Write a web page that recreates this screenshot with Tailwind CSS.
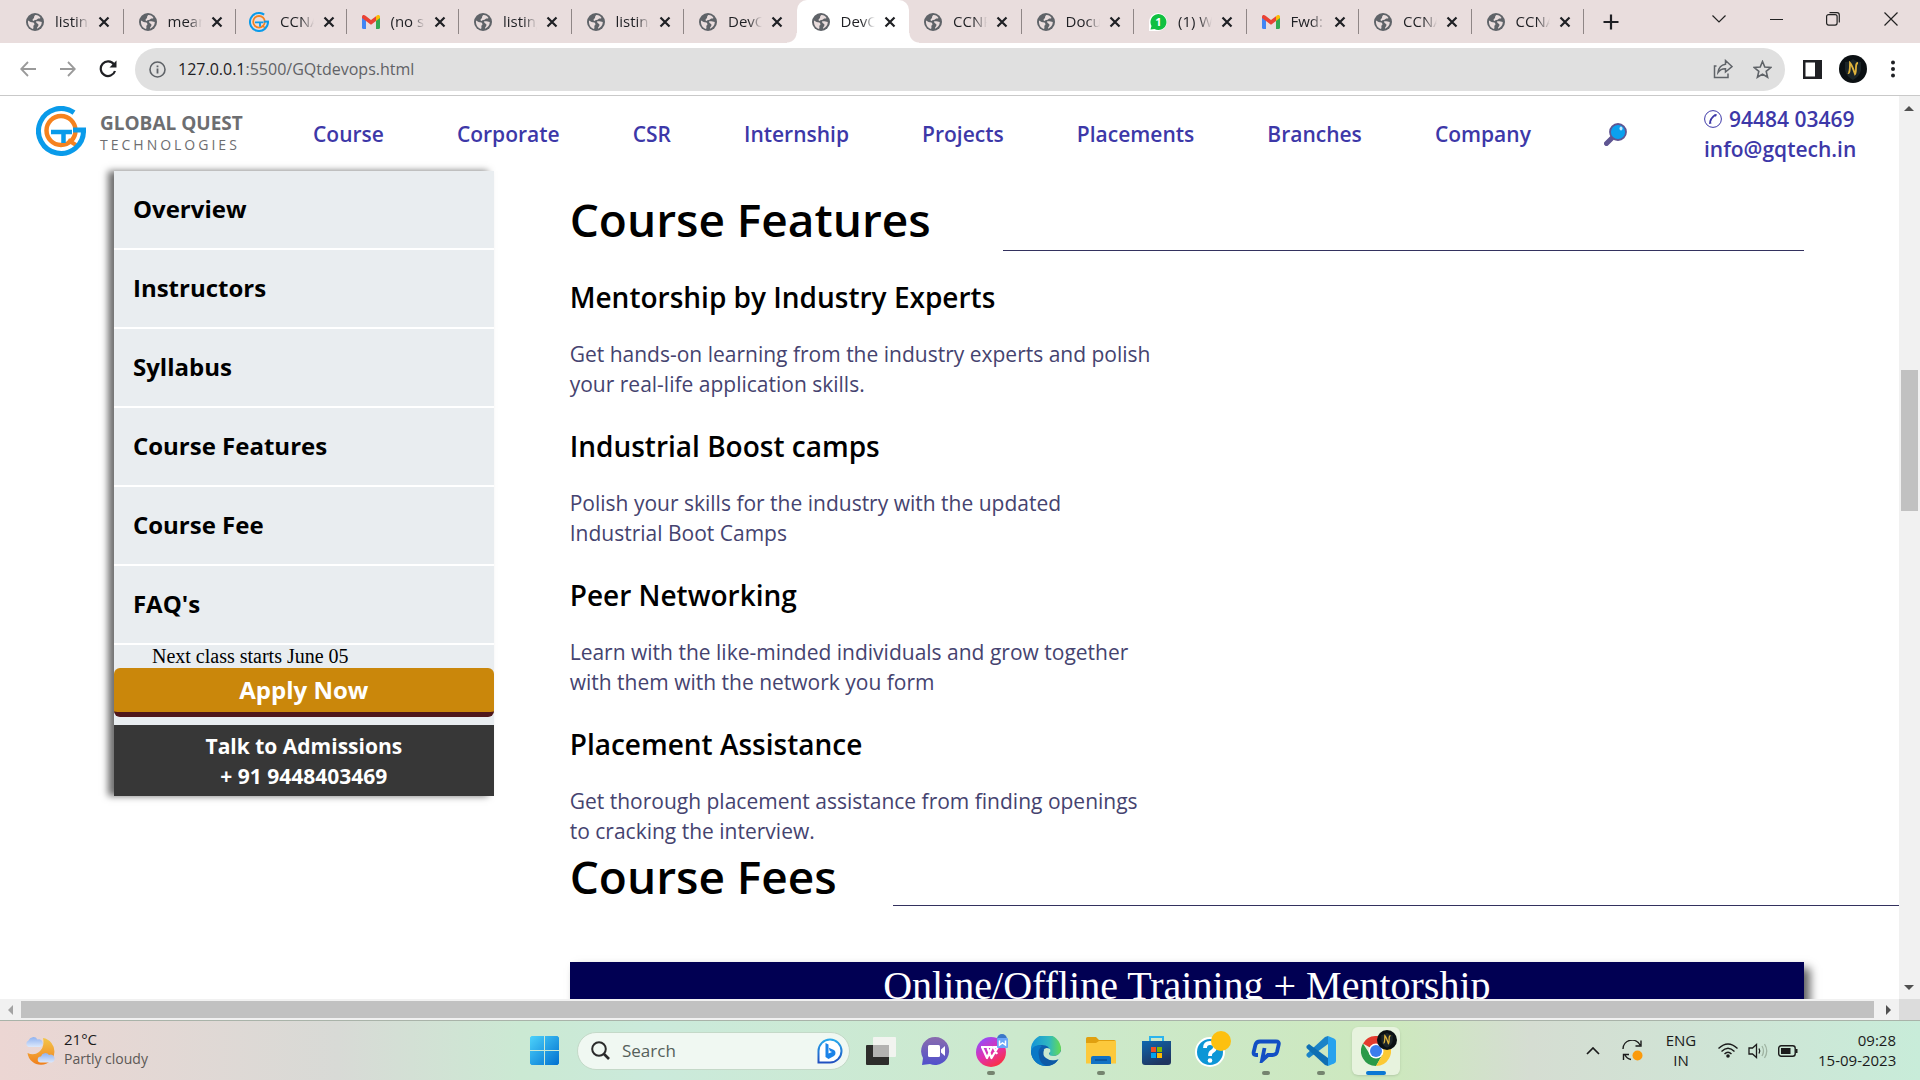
<!DOCTYPE html>
<html lang="en">
<head>
<meta charset="utf-8">
<meta name="viewport" content="width=device-width, initial-scale=1">
<title>DevOps - Global Quest Technologies</title>
<script src="https://cdn.jsdelivr.net/npm/@tailwindcss/browser@4"></script>
</head>
<body class="flex h-screen flex-col overflow-hidden bg-white font-['Open_Sans',sans-serif] text-black">

<!-- Shared icon shapes -->
<svg class="hidden" aria-hidden="true">
  <symbol id="globe" viewBox="0 0 18 18">
    <circle cx="9" cy="9" r="9" fill="#5f6368"/>
    <path d="M2 7.500C4 8.500 5 9.500 7.500 9.500C8.500 10.500 9 12 7.500 12.500C7 13.500 8 14.500 7 16C3.500 15 1.600 11.500 2 7.500ZM9 2.200C11 1.800 13.500 3 14.500 5C13.500 6 12.500 5 11.500 6C10.500 7.500 8.500 6.500 7.500 8C6.500 7.800 6 6.500 7.500 5.500C8.500 5 7.500 3.500 9 2.200ZM10 8.500C12 7.800 14 9 15.800 9C15.800 12 14 14.500 11 15.800C10.500 14.500 12.500 13.500 12.500 12C12.500 10.500 10 10.500 10 8.500Z" fill="#e9dddd"/>
  </symbol>
  <symbol id="close" viewBox="0 0 12 12"><path d="M1.500 1.500L10.500 10.500M10.500 1.500L1.500 10.500" stroke="#1f2024" stroke-width="2.200" fill="none"/></symbol>
  <symbol id="gmail" viewBox="0 0 18 14">
    <path d="M0 2V12.500Q0 14 1.500 14H4V5Z" fill="#4285f4"/><path d="M18 2V12.500Q18 14 16.500 14H14V5Z" fill="#34a853"/>
    <path d="M14 1.200V6L18 3V2C18 0 16 -0.500 14.500 0.700Z" fill="#fbbc04"/><path d="M0 2C0 0 2 -0.500 3.500 0.700L9 5L14 1.200V6L9 9.800L0 3Z" fill="#ea4335"/>
  </symbol>
  <symbol id="gq" viewBox="0 0 50 50">
    <circle cx="25" cy="24.500" r="14.500" fill="none" stroke="#f5821f" stroke-width="4.500"/>
    <path d="M32 34L40 39" stroke="#f5821f" stroke-width="4"/>
    <path d="M38 6.600A22.500 22.500 0 1 0 47.500 24.500" fill="none" stroke="#0a9bea" stroke-width="5"/>
    <path d="M37 24H50" stroke="#0a9bea" stroke-width="5"/>
    <path d="M15 26H36M27.500 26V37" stroke="#0a9bea" stroke-width="4.500"/>
  </symbol>
  <symbol id="avatar" viewBox="0 0 28 28">
    <circle cx="14" cy="14" r="14" fill="#0b1013"/><path d="M6 7Q11 7 14 4Q17 7 22 7V15Q21 21 14 25Q7 21 6 15Z" fill="#1c2528"/>
    <path d="M9 18Q11 19 11 8Q13 10 16 19Q17 18 17 12Q17 8 19 8" fill="none" stroke="#e0b33c" stroke-width="1.800"/>
  </symbol>
</svg>

<!-- Tab strip -->
<header class="flex h-[43px] shrink-0 bg-[#e9dddd] text-[15px]">
  <div class="flex min-w-0 flex-1 pl-[11px]" role="tablist">
    <div class="relative flex min-w-0 flex-1 items-center pl-[15px]"><svg class="size-[18px] shrink-0"><use href="#globe"/></svg><span class="ml-[11px] w-[34px] overflow-hidden whitespace-nowrap bg-linear-to-r from-[#1f2024] from-60% to-transparent bg-clip-text text-transparent">listing</span><button class="ml-[9px]" aria-label="Close tab"><svg class="size-3"><use href="#close"/></svg></button><i class="absolute right-0 top-[9px] h-[25px] w-px bg-[#8f8686]"></i></div>
    <div class="relative flex min-w-0 flex-1 items-center pl-[15px]"><svg class="size-[18px] shrink-0"><use href="#globe"/></svg><span class="ml-[11px] w-[34px] overflow-hidden whitespace-nowrap bg-linear-to-r from-[#1f2024] from-60% to-transparent bg-clip-text text-transparent">mean</span><button class="ml-[9px]" aria-label="Close tab"><svg class="size-3"><use href="#close"/></svg></button><i class="absolute right-0 top-[9px] h-[25px] w-px bg-[#8f8686]"></i></div>
    <div class="relative flex min-w-0 flex-1 items-center pl-[13px]"><svg class="size-5 shrink-0"><use href="#gq"/></svg><span class="ml-[11px] w-[34px] overflow-hidden whitespace-nowrap bg-linear-to-r from-[#1f2024] from-60% to-transparent bg-clip-text text-transparent">CCNA</span><button class="ml-[9px]" aria-label="Close tab"><svg class="size-3"><use href="#close"/></svg></button><i class="absolute right-0 top-[9px] h-[25px] w-px bg-[#8f8686]"></i></div>
    <div class="relative flex min-w-0 flex-1 items-center pl-[15px]"><svg class="h-[14px] w-[18px] shrink-0"><use href="#gmail"/></svg><span class="ml-[11px] w-[34px] overflow-hidden whitespace-nowrap bg-linear-to-r from-[#1f2024] from-60% to-transparent bg-clip-text text-transparent">(no s</span><button class="ml-[9px]" aria-label="Close tab"><svg class="size-3"><use href="#close"/></svg></button><i class="absolute right-0 top-[9px] h-[25px] w-px bg-[#8f8686]"></i></div>
    <div class="relative flex min-w-0 flex-1 items-center pl-[15px]"><svg class="size-[18px] shrink-0"><use href="#globe"/></svg><span class="ml-[11px] w-[34px] overflow-hidden whitespace-nowrap bg-linear-to-r from-[#1f2024] from-60% to-transparent bg-clip-text text-transparent">listing</span><button class="ml-[9px]" aria-label="Close tab"><svg class="size-3"><use href="#close"/></svg></button><i class="absolute right-0 top-[9px] h-[25px] w-px bg-[#8f8686]"></i></div>
    <div class="relative flex min-w-0 flex-1 items-center pl-[15px]"><svg class="size-[18px] shrink-0"><use href="#globe"/></svg><span class="ml-[11px] w-[34px] overflow-hidden whitespace-nowrap bg-linear-to-r from-[#1f2024] from-60% to-transparent bg-clip-text text-transparent">listing</span><button class="ml-[9px]" aria-label="Close tab"><svg class="size-3"><use href="#close"/></svg></button><i class="absolute right-0 top-[9px] h-[25px] w-px bg-[#8f8686]"></i></div>
    <div class="relative flex min-w-0 flex-1 items-center pl-[15px]"><svg class="size-[18px] shrink-0"><use href="#globe"/></svg><span class="ml-[11px] w-[34px] overflow-hidden whitespace-nowrap bg-linear-to-r from-[#1f2024] from-60% to-transparent bg-clip-text text-transparent">DevO</span><button class="ml-[9px]" aria-label="Close tab"><svg class="size-3"><use href="#close"/></svg></button></div>
    <div class="relative flex min-w-0 flex-1 items-center rounded-t-[10px] bg-white pl-[15px]" role="tab" aria-selected="true"><i class="absolute bottom-0 right-full size-[10px] bg-radial-[circle_at_0%_0%] from-transparent from-[9px] to-white to-[10px]"></i><i class="absolute bottom-0 left-full size-[10px] bg-radial-[circle_at_100%_0%] from-transparent from-[9px] to-white to-[10px]"></i><svg class="size-[18px] shrink-0"><use href="#globe"/></svg><span class="ml-[11px] w-[34px] overflow-hidden whitespace-nowrap bg-linear-to-r from-[#1f2024] from-60% to-transparent bg-clip-text text-transparent">DevO</span><button class="ml-[9px]" aria-label="Close tab"><svg class="size-3"><use href="#close"/></svg></button></div>
    <div class="relative flex min-w-0 flex-1 items-center pl-[15px]"><svg class="size-[18px] shrink-0"><use href="#globe"/></svg><span class="ml-[11px] w-[34px] overflow-hidden whitespace-nowrap bg-linear-to-r from-[#1f2024] from-60% to-transparent bg-clip-text text-transparent">CCNP</span><button class="ml-[9px]" aria-label="Close tab"><svg class="size-3"><use href="#close"/></svg></button><i class="absolute right-0 top-[9px] h-[25px] w-px bg-[#8f8686]"></i></div>
    <div class="relative flex min-w-0 flex-1 items-center pl-[15px]"><svg class="size-[18px] shrink-0"><use href="#globe"/></svg><span class="ml-[11px] w-[34px] overflow-hidden whitespace-nowrap bg-linear-to-r from-[#1f2024] from-60% to-transparent bg-clip-text text-transparent">Docu</span><button class="ml-[9px]" aria-label="Close tab"><svg class="size-3"><use href="#close"/></svg></button><i class="absolute right-0 top-[9px] h-[25px] w-px bg-[#8f8686]"></i></div>
    <div class="relative flex min-w-0 flex-1 items-center pl-[15px]"><svg class="size-[18px] shrink-0" viewBox="0 0 18 18"><path d="M0 18V9A9 9 0 1 1 9 18Z" fill="#fff"/><path d="M1.500 16.500L2.500 13A8 8 0 1 1 5.500 16Z" fill="#10c040"/><text x="9.500" y="13" text-anchor="middle" font-size="11" font-weight="700" fill="#fff">1</text></svg><span class="ml-[11px] w-[34px] overflow-hidden whitespace-nowrap bg-linear-to-r from-[#1f2024] from-60% to-transparent bg-clip-text text-transparent">(1) W</span><button class="ml-[9px]" aria-label="Close tab"><svg class="size-3"><use href="#close"/></svg></button><i class="absolute right-0 top-[9px] h-[25px] w-px bg-[#8f8686]"></i></div>
    <div class="relative flex min-w-0 flex-1 items-center pl-[15px]"><svg class="h-[14px] w-[18px] shrink-0"><use href="#gmail"/></svg><span class="ml-[11px] w-[34px] overflow-hidden whitespace-nowrap bg-linear-to-r from-[#1f2024] from-60% to-transparent bg-clip-text text-transparent">Fwd:</span><button class="ml-[9px]" aria-label="Close tab"><svg class="size-3"><use href="#close"/></svg></button><i class="absolute right-0 top-[9px] h-[25px] w-px bg-[#8f8686]"></i></div>
    <div class="relative flex min-w-0 flex-1 items-center pl-[15px]"><svg class="size-[18px] shrink-0"><use href="#globe"/></svg><span class="ml-[11px] w-[34px] overflow-hidden whitespace-nowrap bg-linear-to-r from-[#1f2024] from-60% to-transparent bg-clip-text text-transparent">CCNA</span><button class="ml-[9px]" aria-label="Close tab"><svg class="size-3"><use href="#close"/></svg></button><i class="absolute right-0 top-[9px] h-[25px] w-px bg-[#8f8686]"></i></div>
    <div class="relative flex min-w-0 flex-1 items-center pl-[15px]"><svg class="size-[18px] shrink-0"><use href="#globe"/></svg><span class="ml-[11px] w-[34px] overflow-hidden whitespace-nowrap bg-linear-to-r from-[#1f2024] from-60% to-transparent bg-clip-text text-transparent">CCNA</span><button class="ml-[9px]" aria-label="Close tab"><svg class="size-3"><use href="#close"/></svg></button><i class="absolute right-0 top-[9px] h-[25px] w-px bg-[#8f8686]"></i></div>
  </div>
  <div class="flex w-[336px] shrink-0 items-center justify-between pl-[19px] pr-[22px]">
    <button class="mr-[56px]" aria-label="New tab"><svg class="size-4" viewBox="0 0 16 16"><path d="M8 0.500V15.500M0.500 8H15.500" stroke="#1f2024" stroke-width="2.200"/></svg></button>
    <div class="flex flex-1 items-center justify-between pb-[5px] pl-[37px]">
      <button aria-label="Search tabs"><svg class="h-2 w-[14px]" viewBox="0 0 14 8"><path d="M0.500 0.500L7 7L13.500 0.500" fill="none" stroke="#222" stroke-width="1.200"/></svg></button>
      <button aria-label="Minimize"><svg class="h-3 w-[13px]" viewBox="0 0 13 12"><path d="M0 6.500H13" stroke="#222"/></svg></button>
      <button aria-label="Restore"><svg class="size-[14px]" viewBox="0 0 14 14"><rect x="0.600" y="2.600" width="10.500" height="10.500" rx="2" fill="none" stroke="#222" stroke-width="1.200"/><path d="M3.500 0.700H11Q13.300 0.700 13.300 3V10.500" fill="none" stroke="#222" stroke-width="1.200"/></svg></button>
      <button aria-label="Close"><svg class="size-[14px]" viewBox="0 0 14 14"><path d="M0.500 0.500L13.500 13.500M13.500 0.500L0.500 13.500" stroke="#222" stroke-width="1.200"/></svg></button>
    </div>
  </div>
</header>

<!-- Toolbar -->
<div class="flex h-[53px] shrink-0 items-center border-b border-[#c9c9c9] pl-5 pr-6">
  <button aria-label="Back"><svg class="size-4" viewBox="0 0 16 16"><path d="M16 8H1.500M8 1L1.200 8L8 15" fill="none" stroke="#9a9a9a" stroke-width="1.800"/></svg></button>
  <button class="ml-6" aria-label="Forward"><svg class="size-4" viewBox="0 0 16 16"><path d="M0 8H14.500M8 1L14.800 8L8 15" fill="none" stroke="#9a9a9a" stroke-width="1.800"/></svg></button>
  <button class="ml-[23px]" aria-label="Reload"><svg class="size-[18px]" viewBox="0 0 18 18"><path d="M15 4.500A7.300 7.300 0 1 0 16 11" fill="none" stroke="#1f2024" stroke-width="2.200"/><path d="M17.500 0.500V7.500H10.500Z" fill="#1f2024"/></svg></button>
  <div class="ml-[18px] flex h-[43px] min-w-0 flex-1 items-center rounded-full bg-[#e0e0e0] pl-[14px] pr-[13px]">
    <svg class="size-[17px]" viewBox="0 0 17 17"><circle cx="8.500" cy="8.500" r="7.500" fill="none" stroke="#5f6368" stroke-width="1.600"/><path d="M8.500 7.500V12.500M8.500 4.500V6.200" stroke="#5f6368" stroke-width="1.800"/></svg>
    <div class="ml-3 flex-1 text-base text-[#606266]" role="textbox" aria-label="Address"><span class="text-[#1f2024]">127.0.0.1</span>:5500/GQtdevops.html</div>
    <button aria-label="Share"><svg class="size-5" viewBox="0 0 20 20"><path d="M3.500 7H1.500V18.500H15V14.500M12.500 1.500L19 7.500L12.500 13V9.800Q8 9.500 5 13.500Q6 6 12.500 5.200Z" fill="none" stroke="#5f6368" stroke-width="1.500"/></svg></button>
    <button class="ml-5" aria-label="Bookmark"><svg class="size-[19px]" viewBox="0 0 19 19"><path d="M9.500 1.500L11.800 7L17.800 7.500L13.200 11.400L14.600 17.200L9.500 14.100L4.400 17.200L5.800 11.400L1.200 7.500L7.200 7Z" fill="none" stroke="#5f6368" stroke-width="1.600"/></svg></button>
  </div>
  <button class="ml-[18px]" aria-label="Side panel"><svg class="size-[19px]" viewBox="0 0 19 19"><path d="M0 0H19V19H0ZM2.500 2.500V16.500H12V2.500Z" fill="#1f2024" fill-rule="evenodd"/></svg></button>
  <button class="ml-[17px]" aria-label="Profile"><svg class="size-7"><use href="#avatar"/></svg></button>
  <button class="ml-[23px]" aria-label="Menu"><svg class="h-[18px] w-[6px]" viewBox="0 0 6 18"><g fill="#1f2024"><circle cx="3" cy="2.500" r="2"/><circle cx="3" cy="9" r="2"/><circle cx="3" cy="15.500" r="2"/></g></svg></button>
</div>

<!-- Page viewport -->
<div class="flex min-h-0 flex-1">
  <div class="min-w-0 flex-1 overflow-hidden">
    <div class="flex h-[74px] items-center pl-9 pr-9 text-[21px] font-semibold leading-[30px] text-[#3d38a8]">
      <a href="#" class="flex items-center pb-1">
        <svg class="size-[50px]"><use href="#gq"/></svg>
        <span class="ml-[14px] flex w-[140px] flex-col pt-1 text-[#6d6e71]"><b class="whitespace-nowrap text-[19px] font-bold leading-6">GLOBAL QUEST</b><span class="whitespace-nowrap text-[14px] font-medium leading-5 tracking-[3px]">TECHNOLOGIES</span></span>
      </a>
      <nav class="ml-[73px] flex flex-1 items-center justify-between pt-0.5">
        <a href="#">Course</a><a href="#">Corporate</a><a href="#">CSR</a><a href="#">Internship</a><a href="#">Projects</a><a href="#">Placements</a><a href="#">Branches</a><a href="#">Company</a>
        <a href="#" aria-label="Search"><svg class="size-[23px]" viewBox="0 0 23 23"><path d="M9 14L2.500 20.500" stroke="#5f5592" stroke-width="5" stroke-linecap="round"/><circle cx="14" cy="9" r="8" fill="#0aa0ee" stroke="#5f5592" stroke-width="1.800"/><ellipse cx="17" cy="5.500" rx="1.500" ry="2" fill="#bfe8ff"/></svg></a>
      </nav>
      <div class="ml-[77px] w-[159px] whitespace-nowrap pt-0.5">
        <div class="flex items-center"><svg class="mr-[7px] size-[18px]" viewBox="0 0 18 18"><circle cx="9" cy="9" r="8.400" fill="none" stroke="#3d38a8"/><path d="M5 14Q5 8 11 4L13 4.500L12 6.500L10.500 6.500Q7.500 9 7 12L7.500 13.500Z" fill="#3d38a8"/></svg>94484 03469</div>
        <a href="#">info@gqtech.in</a>
      </div>
    </div>

    <div class="flex items-start pt-px">
      <aside class="ml-[6%] w-[20%] shrink-0 bg-[#e9edf0] shadow-[-6px_0_7px_#707070]">
        <nav class="text-[24px] font-bold">
          <a href="#" class="flex h-[79px] items-center border-b-2 border-white pb-0.5 pl-[19px]">Overview</a>
          <a href="#" class="flex h-[79px] items-center border-b-2 border-white pb-0.5 pl-[19px]">Instructors</a>
          <a href="#" class="flex h-[79px] items-center border-b-2 border-white pb-0.5 pl-[19px]">Syllabus</a>
          <a href="#" class="flex h-[79px] items-center border-b-2 border-white pb-0.5 pl-[19px]">Course Features</a>
          <a href="#" class="flex h-[79px] items-center border-b-2 border-white pb-0.5 pl-[19px]">Course Fee</a>
          <a href="#" class="flex h-[79px] items-center border-b-2 border-white pb-0.5 pl-[19px]">FAQ's</a>
        </nav>
        <p class="pl-[38px] font-['Liberation_Serif',serif] text-[20px] leading-[23px]">Next class starts June 05</p>
        <button class="mb-2 block h-[49px] w-full rounded-md border-b-[5px] border-[#4f171b] bg-[#ca870b] text-[24px] font-bold leading-[44px] text-white">Apply Now</button>
        <div class="bg-[#373737] pb-[5px] pt-[6px] text-center text-[21px] font-bold leading-[30px] text-white">Talk to Admissions<br>+ 91 9448403469</div>
      </aside>

      <main class="ml-[4%] min-w-0 flex-1">
        <section class="pr-[95px]">
          <div class="flex items-end pb-5"><h1 class="pt-4 text-[46px] font-semibold leading-[64px]">Course Features</h1><hr class="ml-[72px] flex-1 border-[#33315e]"></div>
          <h2 class="text-[28px] font-semibold leading-[52px]">Mentorship by Industry Experts</h2>
          <p class="mb-[21px] mt-4 w-[600px] text-[21px] leading-[30px] text-[#45436f]">Get hands-on learning from the industry experts and polish<br>your real-life application skills.</p>
          <h2 class="text-[28px] font-semibold leading-[52px]">Industrial Boost camps</h2>
          <p class="mb-[21px] mt-4 w-[600px] text-[21px] leading-[30px] text-[#45436f]">Polish your skills for the industry with the updated<br>Industrial Boot Camps</p>
          <h2 class="text-[28px] font-semibold leading-[52px]">Peer Networking</h2>
          <p class="mb-[21px] mt-4 w-[600px] text-[21px] leading-[30px] text-[#45436f]">Learn with the like-minded individuals and grow together<br>with them with the network you form</p>
          <h2 class="text-[28px] font-semibold leading-[52px]">Placement Assistance</h2>
          <p class="mt-4 w-[600px] text-[21px] leading-[30px] text-[#45436f]">Get thorough placement assistance from finding openings<br>to cracking the interview.</p>
        </section>
        <div class="flex items-end"><h1 class="text-[46px] font-semibold leading-[60px]">Course Fees</h1><hr class="ml-[56px] flex-1 border-[#33315e]"></div>
        <section class="mr-[95px] mt-14 h-[200px] bg-[#010053] text-center font-['Liberation_Serif',serif] text-[40px] leading-[48px] text-white shadow-[6px_6px_9px_#606060]">Online/Offline Training + Mentorship</section>
      </main>
    </div>
  </div>
  <!-- Vertical scrollbar -->
  <div class="relative w-[21px] shrink-0 bg-[#f1f1f1]">
    <svg class="absolute left-[5px] top-[10px] h-[5px] w-[10px]" viewBox="0 0 10 5"><path d="M0 5L5 0L10 5Z" fill="#505050"/></svg>
    <div class="absolute left-[2px] top-[274px] h-[141px] w-[17px] bg-[#c1c1c1]"></div>
    <svg class="absolute bottom-[9px] left-[5px] h-[5px] w-[10px]" viewBox="0 0 10 5"><path d="M0 0L5 5L10 0Z" fill="#505050"/></svg>
  </div>
</div>
<!-- Horizontal scrollbar -->
<div class="flex h-[21px] shrink-0 items-center bg-[#f1f1f1]">
  <svg class="ml-2 h-[10px] w-[5px]" viewBox="0 0 5 10"><path d="M5 0L0 5L5 10Z" fill="#a3a3a3"/></svg>
  <div class="ml-2 h-[17px] flex-1 bg-[#c1c1c1]"></div>
  <svg class="ml-3 mr-2 h-[10px] w-[5px]" viewBox="0 0 5 10"><path d="M0 0L5 5L0 10Z" fill="#505050"/></svg>
  <div class="h-full w-[21px] bg-[#dcdcdc]"></div>
</div>

<!-- Taskbar -->
<footer class="grid h-[60px] shrink-0 grid-cols-[1fr_auto_1fr] items-center border-t border-[#a9b3a9] text-[15px] leading-5 text-[#1b1b1b]">
  <div class="flex h-full items-center bg-linear-to-r from-[#ecd6d3] via-[#d8dad6] via-65% to-[#cbe9d3] pl-[25px]">
    <svg class="size-[30px]" viewBox="0 0 30 30"><defs><linearGradient id="moon" x2="0" y2="1"><stop stop-color="#f3c64a"/><stop offset="1" stop-color="#f07f1c"/></linearGradient><linearGradient id="cloud" x2="0" y2="1"><stop stop-color="#8fb2f0"/><stop offset="1" stop-color="#dce8fb"/></linearGradient></defs><path d="M18 2A13.500 13.500 0 1 1 2.500 17Q9 20 14 16Q20 11 18 2Z" fill="url(#moon)"/><path d="M3.500 11A3.500 3.500 0 0 1 3.500 4.500A5 5 0 0 1 12.500 3.500A3.800 3.800 0 0 1 15 11Z" fill="url(#cloud)"/><path d="M15.500 26.500A3 3 0 0 1 16 20.500A4.500 4.500 0 0 1 24 19A4 4 0 0 1 27 26.500Z" fill="url(#cloud)"/></svg>
    <div class="ml-[9px] pb-[3px]"><div>21°C</div><div class="text-[14px] text-[#5c5856]">Partly cloudy</div></div>
  </div>
  <div class="flex h-full items-center gap-[7px] bg-linear-to-r from-[#cbe9d3] via-[#cbeadb] via-15% to-[#cde8be]">
    <button class="flex size-12 items-center justify-center" aria-label="Start"><svg class="size-[29px]" viewBox="0 0 29 29"><defs><linearGradient id="win" x2="1" y2="1"><stop stop-color="#4cd2fb"/><stop offset="1" stop-color="#0070d0"/></linearGradient></defs><path d="M1.500 0H14V14H0V1.500ZM15 0H27.500L29 1.500V14H15ZM0 15H14V29H1.500L0 27.500ZM15 15H29V27.500L27.500 29H15Z" fill="url(#win)"/></svg></button>
    <label class="ml-[2px] flex h-[38px] w-[273px] items-center rounded-full border border-[#c4d9c8] bg-[#f0f8f2] pl-[13px] pr-[6px]">
      <svg class="size-[19px]" viewBox="0 0 19 19"><circle cx="8" cy="8" r="6.800" fill="none" stroke="#2a2a2a" stroke-width="2"/><path d="M13 13L18 18" stroke="#2a2a2a" stroke-width="2.600"/></svg>
      <input class="ml-3 w-0 flex-1 bg-transparent text-[17px] outline-none placeholder:text-[#55605a]" placeholder="Search" aria-label="Search">
      <svg class="size-[26px]" viewBox="0 0 26 26"><defs><linearGradient id="bing" x2="0" y2="1"><stop stop-color="#27a8ec"/><stop offset="1" stop-color="#2050c0"/></linearGradient></defs><path d="M1.500 24.500V13A11.500 11.500 0 1 1 13 24.500Z" fill="#fff" stroke="url(#bing)" stroke-width="2"/><path d="M8.500 5L11.500 6.500V15.500L15 14L12.800 13L11.800 9.800L17 12Q18.500 13 18.500 15Q18.500 17 17 18L11.500 21L8.500 19Z" fill="#1c83e8"/></svg>
    </label>
    <button class="flex size-12 items-center justify-center" aria-label="Task view"><svg class="size-[30px]" viewBox="0 0 30 30"><rect y="9" width="23" height="20" rx="1" fill="#2d2d2b"/><rect x="7" y="1" width="23" height="20" rx="1" fill="#f2f4f0"/><path d="M7 9H23V21H7Z" fill="#b3b3b1"/></svg></button>
    <button class="flex size-12 items-center justify-center" aria-label="Chat"><svg class="size-[30px]" viewBox="0 0 30 30"><defs><linearGradient id="chat" x2="0" y2="1"><stop stop-color="#8a6cae"/><stop offset="1" stop-color="#5050cc"/></linearGradient></defs><path d="M1 29L2 22A14 14 0 1 1 9 28Z" fill="url(#chat)"/><rect x="7" y="9" width="12" height="12" rx="1.500" fill="#fff"/><path d="M20 13.500L24 10V20L20 16.500Z" fill="#fff"/></svg></button>
    <button class="relative flex size-12 items-center justify-center" aria-label="WPS Office"><svg class="size-[34px]" viewBox="0 0 34 34"><defs><linearGradient id="wps" x1="0.200" x2="0.800" y2="1"><stop stop-color="#8d50ff"/><stop offset="0.500" stop-color="#e030b0"/><stop offset="1" stop-color="#ff3030"/></linearGradient></defs><circle cx="17" cy="18" r="15" fill="url(#wps)"/><path d="M7 13H18L13 24L8 13M13.500 14L17.500 24L24 13H19.500L23 20" fill="none" stroke="#fff" stroke-width="2.200" stroke-linejoin="round"/><circle cx="28" cy="5" r="5" fill="#3b77c8"/><rect x="23" y="4" width="11" height="10" rx="1" fill="#6aa6f8"/><path d="M25.500 6.500V11L28.500 9L31.500 11V6.500" fill="none" stroke="#fff" stroke-width="1.500"/></svg><i class="absolute bottom-0 left-5 h-1 w-2 rounded-full bg-[#75846f]"></i></button>
    <button class="flex size-12 items-center justify-center" aria-label="Edge"><svg class="size-[30px]" viewBox="0 0 30 30"><defs><linearGradient id="edge" x2="1"><stop stop-color="#1493d8"/><stop offset="0.600" stop-color="#30b8c0"/><stop offset="1" stop-color="#65dc50"/></linearGradient></defs><circle cx="15" cy="15" r="15" fill="#0d5fae"/><path d="M0 14A15 15 0 0 1 30 13Q30 20 22 20Q17 20 19 16Q19 9 11 9Q2 9 0 16Z" fill="url(#edge)"/><path d="M0 15Q3 8 11 10Q6 14 8 20Q10 27 17 30A15 15 0 0 1 0 15Z" fill="#0a78c6"/><path d="M12 15Q14 10 19 13Q20 16 18 17Q18 20 22 20Q28 20 30 15V20L28 23Q20 26 15 23Q11 20 12 15Z" fill="#cbe9d0"/><path d="M13 14Q11 19 15 22Q20 26 27 24Q23 30 15 30Q8 27 8 19Q9 14 13 14Z" fill="#0e5aa6"/></svg></button>
    <button class="relative flex size-12 items-center justify-center" aria-label="File Explorer"><svg class="h-[27px] w-[30px]" viewBox="0 0 30 27"><path d="M0 1.500Q0 0 1.500 0H10L13 3H28Q30 3 30 5V12H0Z" fill="#e0a010"/><path d="M0 6H10L13 4H30V26.500H0Z" fill="#fcc93c"/><path d="M5 27V21Q5 19 7 19H23Q25 19 25 21V27Z" fill="#1272c4"/><path d="M9 23H21" stroke="#0b4f94" stroke-width="1.500"/></svg><i class="absolute bottom-0 left-5 h-1 w-2 rounded-full bg-[#75846f]"></i></button>
    <button class="flex size-12 items-center justify-center" aria-label="Microsoft Store"><svg class="size-[29px]" viewBox="0 0 29 29"><defs><linearGradient id="store" x2="0.500" y2="1"><stop stop-color="#0f68b0"/><stop offset="1" stop-color="#1f3560"/></linearGradient></defs><path d="M8 6V1H21V6" fill="none" stroke="#2bb4ee" stroke-width="2"/><path d="M0 5H29V26Q29 29 26 29H3Q0 29 0 26Z" fill="url(#store)"/><path d="M9 11H14V16H9Z" fill="#f25022"/><path d="M15 11H20V16H15Z" fill="#7fba00"/><path d="M9 17H14V22H9Z" fill="#00a4ef"/><path d="M15 17H20V22H15Z" fill="#ffb900"/></svg></button>
    <button class="flex size-12 items-center justify-center pb-1 pl-1" aria-label="Help"><svg class="size-9" viewBox="0 0 36 36"><circle cx="15" cy="21" r="14" fill="#0c96d6" stroke="#fff" stroke-width="2"/><path d="M10 17Q10 12 15 12Q20 12 20 16Q20 19 17 20.500Q15 21.500 15 25" fill="none" stroke="#fff" stroke-width="3.800"/><circle cx="15" cy="29.500" r="2.300" fill="#fff"/><circle cx="26" cy="10" r="10" fill="#fdc00f"/></svg></button>
    <button class="relative flex size-12 items-center justify-center" aria-label="PC Manager"><svg class="h-6 w-[30px]" viewBox="0 0 30 24"><path d="M7 16H5Q2 16 2.700 13L4.500 5.500Q5.500 2.500 9 2.500H25Q28.500 2.500 27.700 5.500L26 13Q25 16 21.500 16H17L11 21.500L13.500 9" fill="none" stroke="#124fc4" stroke-width="3.800"/></svg><i class="absolute bottom-0 left-5 h-1 w-2 rounded-full bg-[#75846f]"></i></button>
    <button class="relative flex size-12 items-center justify-center" aria-label="Visual Studio Code"><svg class="size-[30px]" viewBox="0 0 30 30"><path d="M22 8L3 22L0.500 20V18L19 1L22 0Z" fill="#1a83c8"/><path d="M22 22L3 8L0.500 10V12L19 29L22 30Z" fill="#0f6fb3"/><path d="M22 0L28 2.500Q30 3.500 30 5V25Q30 26.500 28 27.500L22 30Z" fill="#27a2ee"/></svg><i class="absolute bottom-0 left-5 h-1 w-2 rounded-full bg-[#75846f]"></i></button>
    <button class="relative flex size-12 items-center justify-center rounded-md bg-[#e7f3de] shadow-sm" aria-label="Chrome"><svg class="size-[30px]" viewBox="0 0 30 30"><path d="M15 15L2 7.500A15 15 0 0 1 28 7.500L15 8Z" fill="#e33b2e"/><path d="M2 7.500A15 15 0 0 0 15 30L21.500 18.500L9 18.500Z" fill="#2a9a48"/><path d="M28 7.500A15 15 0 0 1 15 30L21.500 18.500L20 7.500Z" fill="#fcc934"/><circle cx="15" cy="15" r="7.500" fill="#fff"/><circle cx="15" cy="15" r="6" fill="#3b7ded"/></svg><svg class="absolute right-[3px] top-[3px] size-5"><use href="#avatar"/></svg><i class="absolute bottom-0 left-[14px] h-1 w-5 rounded-full bg-[#0b78d4]"></i></button>
  </div>
  <div class="flex h-full items-center justify-end bg-linear-to-r from-[#cde8be] via-[#d5ddd2] via-25% to-[#c8ecd9] pr-6">
    <svg class="h-2 w-[14px]" viewBox="0 0 14 8"><path d="M1 7L7 1L13 7" fill="none" stroke="#1b1b1b" stroke-width="1.700"/></svg>
    <svg class="ml-[22px] size-[21px]" viewBox="0 0 21 21"><path d="M1 9A9 9 0 0 1 18 5M19 0.500V6H13.500M9 19.500A8 8 0 0 1 3 15M1.500 20V14.500H7" fill="none" stroke="#1b1b1b" stroke-width="1.400"/><circle cx="15.500" cy="15.500" r="5" fill="#fb9a0c"/></svg>
    <div class="ml-[22px] w-8 pb-0.5 text-center">ENG<br>IN</div>
    <svg class="ml-[21px] h-[15px] w-[20px]" viewBox="0 0 20 15"><path d="M0.500 5.500Q10 -3.500 19.500 5.500M3.500 8.500Q10 2 16.500 8.500M6.500 11Q10 7.500 13.500 11" fill="none" stroke="#1b1b1b" stroke-width="1.400"/><circle cx="10" cy="13" r="1.800" fill="#1b1b1b"/></svg>
    <svg class="ml-[10px] h-4 w-5" viewBox="0 0 20 16"><path d="M1 5H4.500L8.500 1.500V14.500L4.500 11H1Z" fill="none" stroke="#1b1b1b" stroke-width="1.300"/><path d="M11 5.500Q12.500 8 11 10.500" fill="none" stroke="#1b1b1b" stroke-width="1.300"/><path d="M14 3Q17 8 14 13M16.500 1Q21 8 16.500 15" fill="none" stroke="#9fb3a2" stroke-width="1.300"/></svg>
    <svg class="ml-[10px] h-3 w-5" viewBox="0 0 20 12"><rect x="0.700" y="0.700" width="16.500" height="10.600" rx="2.500" fill="none" stroke="#1b1b1b" stroke-width="1.400"/><rect x="3" y="3" width="9.500" height="6" fill="#1b1b1b"/><path d="M18.500 4V8" stroke="#1b1b1b" stroke-width="2"/></svg>
    <div class="ml-5 w-[78px] whitespace-nowrap pb-0.5 text-right text-[15px]">09:28<br>15-09-2023</div>
  </div>
</footer>
</body>
</html>
